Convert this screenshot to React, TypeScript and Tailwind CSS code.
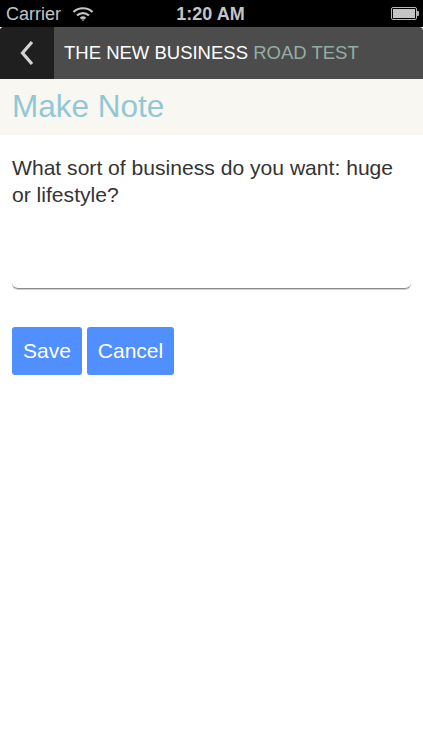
export default function App() {
  return (
    <div className="min-h-[750px] bg-white font-['Liberation_Sans',Arial,sans-serif] text-[#333333]">
      {/* status bar */}
      <div className="flex h-[27px] items-center justify-between bg-black pl-[6px] pr-[4px] text-[#c4c4c4]">
        <div className="flex w-[148px] items-center gap-[11px]">
          <span className="text-[18px] leading-none">Carrier</span>
          <svg width="22" height="16" viewBox="0 0 22 16" fill="none" stroke="#c4c4c4" strokeWidth="2.2">
            <path d="M1.5 6 C6.5 1 15.5 1 20.5 6" />
            <path d="M5 9.5 C8.5 6.3 13.5 6.3 17 9.5" />
            <path d="M8.5 12.5 C10 11.3 12 11.3 13.5 12.5" />
            <path d="M9.5 13.5 L11 15.2 L12.5 13.5 Z" fill="#c4c4c4" stroke="none" />
          </svg>
        </div>
        <span className="text-[18px] font-bold leading-none">1:20 AM</span>
        <div className="flex w-[152px] items-center justify-end">
          <div className="flex h-[13px] w-[26px] items-center rounded-[2px] border border-[#b5b5b5] p-[1px]">
            <div className="h-full w-full bg-[#c4c4c4]" />
          </div>
          <div className="h-[5px] w-[2px] rounded-r-[1px] bg-[#b5b5b5]" />
        </div>
      </div>

      {/* nav bar */}
      <div className="flex h-[52px] overflow-hidden rounded-t-[4px] bg-[#4c4c4c]">
        <div className="flex w-[54px] items-center justify-center bg-[#1f1f1f]">
          <svg width="16" height="26" viewBox="0 0 16 26" fill="none" stroke="#d4d4d4" strokeWidth="3.2">
            <path d="M13 2 L3.5 13 L13 24" />
          </svg>
        </div>
        <div className="flex items-center pl-[10px] text-[18.5px] text-white">
          <span>THE NEW BUSINESS&nbsp;</span>
          <span className="text-[#95aca6]">ROAD TEST</span>
        </div>
      </div>

      {/* heading */}
      <div className="flex h-[56px] items-center bg-[#f8f7f1] pl-[12px]">
        <h1 className="text-[31.5px] leading-none text-[#92c8d5]">Make Note</h1>
      </div>

      {/* note */}
      <div className="px-[12px] pt-[19px]">
        <div className="h-[135px] rounded-b-[6px] border-b border-[#8c8c8c] text-[21.1px] leading-[27px] shadow-[0_1px_0_#d0d0d0]">
          What sort of business do you want: huge or lifestyle?
        </div>
        <div className="mt-[38px] flex gap-[5px]">
          <button className="h-[48px] w-[70px] rounded-[3px] bg-[#4f8fff] text-[21px] text-white">Save</button>
          <button className="h-[48px] w-[87px] rounded-[3px] bg-[#4f8fff] text-[21px] text-white">Cancel</button>
        </div>
      </div>
    </div>
  )
}
